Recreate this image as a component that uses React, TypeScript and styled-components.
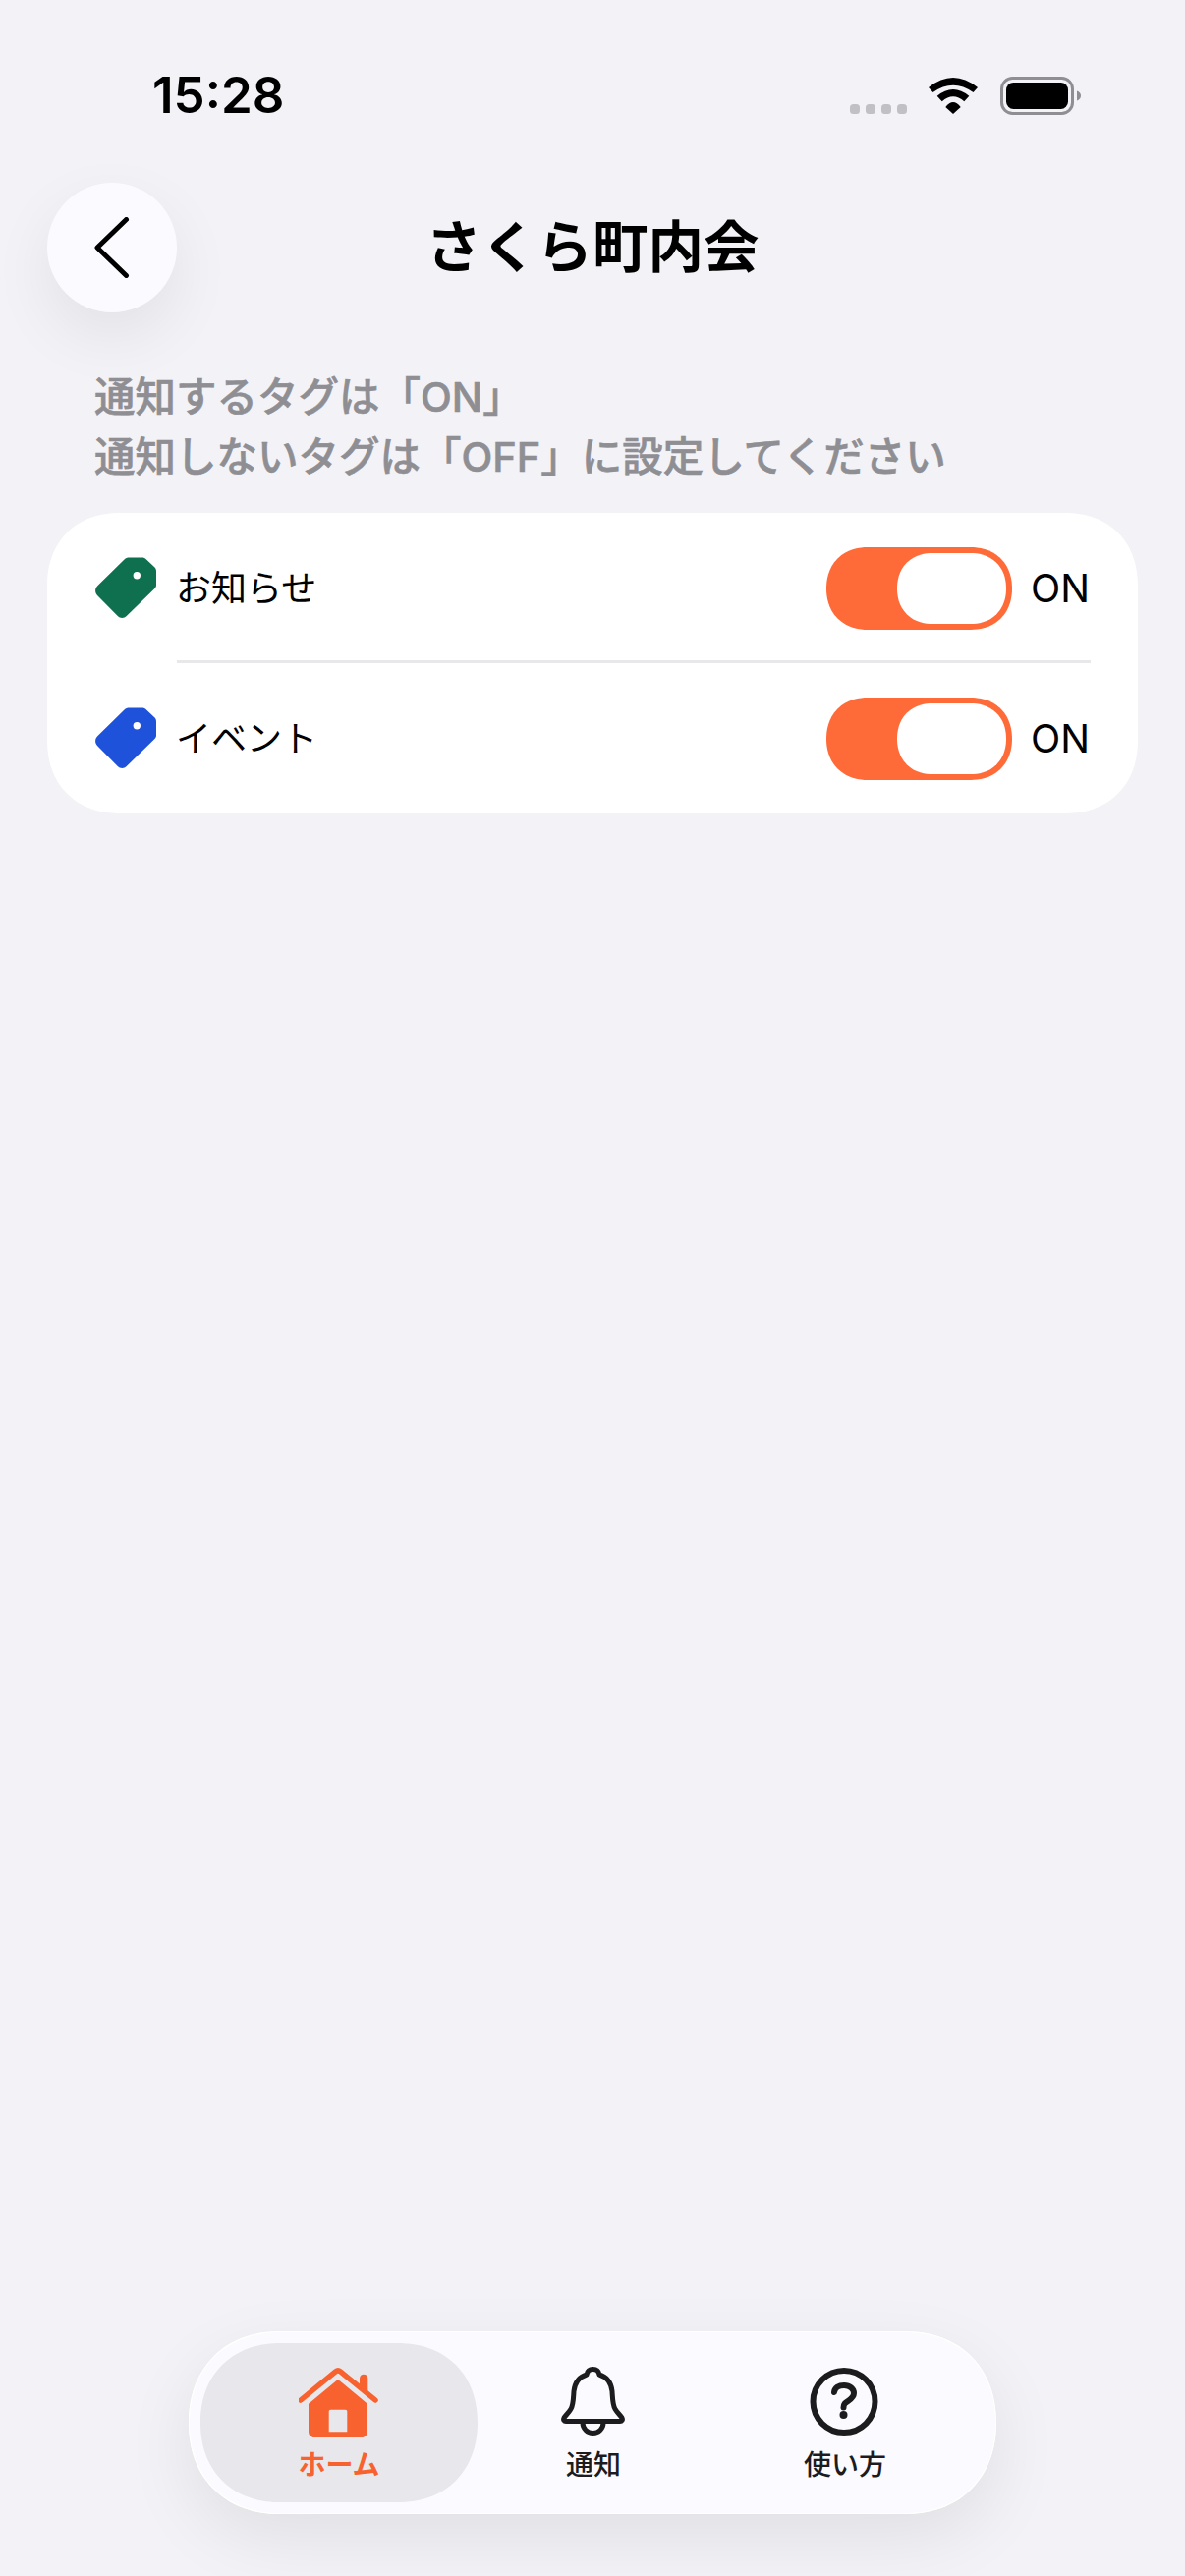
import React from "react";
import styled, { createGlobalStyle, css } from "styled-components";

const Global = createGlobalStyle`
  html, body { margin: 0; padding: 0; background: #f2f2f7; }
  body { font-family: Inter, "Noto Sans CJK JP", sans-serif; color: #000; }
  * { box-sizing: border-box; }
`;

const continuous = css`
  corner-shape: superellipse(1.12);
`;

const Page = styled.div`
  width: 1206px;
  height: 2622px;
  display: flex;
  flex-direction: column;
  overflow: hidden;
  background: #f2f2f7;
`;

const StatusBar = styled.div`
  height: 186px;
  padding: 77px 106px 0 155px;
  display: flex;
  justify-content: space-between;
  align-items: flex-start;
`;

const Time = styled.div`
  font-size: 51px;
  line-height: 40px;
  font-weight: 600;
`;

const StatusIcons = styled.div`
  display: flex;
  align-items: flex-end;
  height: 40px;
`;

const SignalDots = styled.div`
  display: flex;
  gap: 6px;
  margin: 0 22px 1px 0;
`;

const SignalDot = styled.span`
  width: 10px;
  height: 10px;
  border-radius: 3.5px;
  background: #c1c1c5;
`;

const Wifi = styled.svg`
  width: 50px;
  height: 37px;
  margin: 0 23px 1px 0;
`;

const Battery = styled.svg`
  width: 82px;
  height: 39px;
`;

const NavRow = styled.header`
  display: grid;
  grid-template-columns: 132px 1fr 132px;
  align-items: center;
  padding: 0 48px;
`;

const BackButton = styled.button`
  width: 132px;
  height: 132px;
  padding: 0;
  border: 0;
  border-radius: 50%;
  background: #fbfbff;
  box-shadow: 0 24px 64px rgba(0, 0, 0, 0.07);
  display: flex;
  align-items: center;
  justify-content: center;
`;

const BackIcon = styled.svg`
  width: 36px;
  height: 62px;
  margin-left: 0;
`;

const Title = styled.h1`
  margin: 0;
  text-align: center;
  font-size: 56.5px;
  line-height: 70px;
  font-weight: 700;
`;

const Hint = styled.p`
  margin: 56px 0 26px;
  padding-left: 96px;
  font-size: 41.5px;
  line-height: 61px;
  font-weight: 500;
  color: #8e8e93;
  -webkit-text-stroke: 0.6px #8e8e93;
`;

const Card = styled.section`
  margin: 0 48px;
  padding: 35px 48px 34px 49px;
  background: #fff;
  border-radius: 74px;
  ${continuous}
`;

const Row = styled.div`
  height: 84px;
  display: flex;
  align-items: center;
`;

const TagIcon = styled.svg`
  width: 62px;
  height: 62px;
  flex: none;
  margin-top: -2px;
`;

const RowLabel = styled.span`
  flex: 1;
  margin-left: 20px;
  font-size: 36px;
  line-height: 48px;
`;

const Toggle = styled.div`
  width: 189px;
  height: 84px;
  padding: 6px;
  border-radius: 42px;
  background: #ff6b38;
  display: flex;
  justify-content: flex-end;
  ${continuous}
`;

const Thumb = styled.span`
  width: 111px;
  height: 72px;
  border-radius: 36px;
  background: #fff;
  ${continuous}
`;

const ToggleState = styled.span`
  margin-left: 19px;
  width: 61px;
  font-size: 39.5px;
  line-height: 48px;
`;

const Divider = styled.div`
  height: 3px;
  margin: 31px 0 35px 83px;
  background: #e8e8ea;
`;

const TabBar = styled.nav`
  margin: auto 0 63px 192px;
  width: 822px;
  height: 186px;
  padding: 12px;
  border-radius: 93px;
  background: #fbfbff;
  box-shadow: 0 24px 70px rgba(0, 0, 0, 0.08), inset 0 0 0 1px #fff;
  display: grid;
  grid-template-columns: 282px 234px 278px;
  ${continuous}
`;

const Tab = styled.div<{ $active?: boolean }>`
  height: 162px;
  padding-top: 24px;
  border-radius: 81px;
  background: ${(p) => (p.$active ? "#e8e8ec" : "transparent")};
  color: ${(p) => (p.$active ? "#f7622f" : "#1c1c1e")};
  display: flex;
  flex-direction: column;
  align-items: center;
  ${continuous}
`;

const TabIcon = styled.svg`
  height: 72px;
  display: block;
`;

const TabLabel = styled.span<{ $active?: boolean }>`
  margin-top: 11px;
  margin-left: ${(p) => (p.$active ? 0 : 2)}px;
  font-size: 28px;
  line-height: 34px;
  font-weight: ${(p) => (p.$active ? 700 : 500)};
`;

const Tag = ({ color }: { color: string }) => (
  <TagIcon viewBox="0 0 62 62">
    <path
      fill={color}
      fillRule="evenodd"
      d="M29.5 2.5C31 1 32.5 .5 34.5 .5H47.5C49.5 .5 50.5 1 52 2.5L60 10C61.5 11.5 62 12.5 62 14.5V28.5C62 30 61.5 31 60 32.5L32 59.8C29 62.7 25.5 62.7 22.5 59.8L2.5 39.5C-.7 36.5 -.7 32 2.5 29ZM42.3 15A3.7 3.7 0 1 0 42.3 22.4A3.7 3.7 0 1 0 42.3 15Z"
    />
  </TagIcon>
);

export default function App() {
  return (
    <Page>
      <Global />
      <StatusBar>
        <Time>15:28</Time>
        <StatusIcons>
          <SignalDots>
            <SignalDot />
            <SignalDot />
            <SignalDot />
            <SignalDot />
          </SignalDots>
          <Wifi viewBox="0 0 50 37">
            <path d="M0 10Q25 -10 50 10L45.5 15Q25 .4 4.5 15Z" />
            <path d="M8.7 18.7Q25 5.3 41.3 18.7L36.3 24.3Q25 14.3 13.7 24.3Z" />
            <path d="M17.3 30Q25 20 32.7 30L25 37Z" />
          </Wifi>
          <Battery viewBox="0 0 82 39">
            <rect x="1.5" y="1.5" width="72" height="36" rx="11" fill="none" stroke="#8e8e93" strokeWidth="3" />
            <rect x="6" y="6" width="63" height="27" rx="7.5" fill="#000" />
            <path d="M78 14.5C80.5 15.5 82 17 82 19.5C82 22 80.5 23.5 78 24.5Z" fill="#8e8e93" />
          </Battery>
        </StatusIcons>
      </StatusBar>

      <NavRow>
        <BackButton aria-label="戻る">
          <BackIcon viewBox="0 0 36 62">
            <path d="M32.5 2.5L3 31L32.5 59.5" fill="none" stroke="#000" strokeWidth="5" strokeLinecap="round" strokeLinejoin="round" />
          </BackIcon>
        </BackButton>
        <Title>さくら町内会</Title>
      </NavRow>

      <Hint>
        通知するタグは「ON」
        <br />
        通知しないタグは「OFF」に設定してください
      </Hint>

      <Card>
        <Row>
          <Tag color="#0f7050" />
          <RowLabel>お知らせ</RowLabel>
          <Toggle>
            <Thumb />
          </Toggle>
          <ToggleState>ON</ToggleState>
        </Row>
        <Divider />
        <Row>
          <Tag color="#1f52db" />
          <RowLabel>イベント</RowLabel>
          <Toggle>
            <Thumb />
          </Toggle>
          <ToggleState>ON</ToggleState>
        </Row>
      </Card>

      <TabBar>
        <Tab $active>
          <TabIcon viewBox="1 0 82 72" width="82">
            <path d="M3 34L38.5 4.8C40 3.6 42 3.6 43.5 4.8L79 34" fill="none" stroke="currentColor" strokeWidth="5.5" strokeLinecap="round" strokeLinejoin="round" />
            <path d="M63 12C63 9 65 7.7 67 7.7C69.5 7.7 71.3 9 71.3 12V28L63 21Z" fill="currentColor" />
            <path
              fill="currentColor"
              fillRule="evenodd"
              d="M39 14.4C40.3 13.2 41.7 13.2 43 14.4L71 37.7V66C71 69.5 68.5 72 65 72H17C13.5 72 11 69.5 11 66V37.7ZM33.5 43.7C32.4 43.7 31.7 44.4 31.7 45.5V66.3H50.3V45.5C50.3 44.4 49.6 43.7 48.5 43.7Z"
            />
          </TabIcon>
          <TabLabel $active>ホーム</TabLabel>
        </Tab>
        <Tab>
          <TabIcon viewBox="0 0 65 72" width="65">
            <path
              d="M32.5 2.5C36.5 2.5 38.5 5 39 8C47 10.5 51 16.5 52 25C52.5 33 52.5 39 55 43C57 46.5 60 49 62 52C63 54 62 55.5 60 55.5H5C3 55.5 2 54 3 52C5 49 8 46.5 10 43C12.5 39 12.5 33 13 25C14 16.5 18 10.5 26 8C26.5 5 28.5 2.5 32.5 2.5Z"
              fill="none"
              stroke="currentColor"
              strokeWidth="5"
              strokeLinejoin="round"
            />
            <path d="M22 57A10.5 10.5 0 0 0 43 57" fill="none" stroke="currentColor" strokeWidth="5" />
          </TabIcon>
          <TabLabel>通知</TabLabel>
        </Tab>
        <Tab>
          <TabIcon viewBox="0 0 70 72" width="70">
            <circle cx="35" cy="35.5" r="31.5" fill="none" stroke="currentColor" strokeWidth="6" />
            <path
              d="M25 26C25.5 21.5 29.5 19 35 19C41 19 45 22.5 45 27C45 31 42 33 39 35C36 37 34.5 38 34.5 41.5"
              fill="none"
              stroke="currentColor"
              strokeWidth="6"
              strokeLinecap="round"
            />
            <circle cx="34.5" cy="49" r="4" fill="currentColor" />
          </TabIcon>
          <TabLabel>使い方</TabLabel>
        </Tab>
      </TabBar>
    </Page>
  );
}
